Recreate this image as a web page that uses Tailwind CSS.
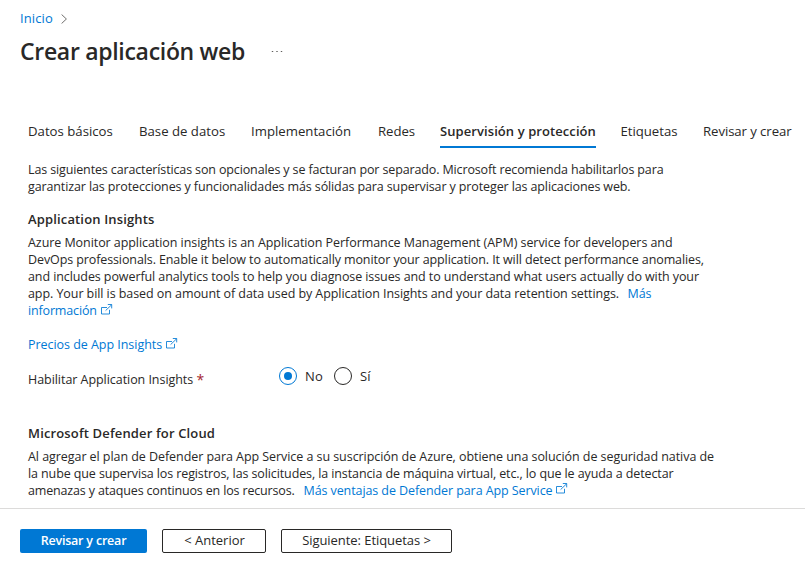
<!DOCTYPE html>
<html lang="es">
<head>
<meta charset="utf-8">
<title>Crear aplicación web</title>
<script src="https://cdn.jsdelivr.net/npm/@tailwindcss/browser@4"></script>
</head>
<body class="flex h-[572px] w-[805px] flex-col overflow-hidden bg-white font-['Open_Sans',sans-serif] text-[12.5px] leading-[17px] whitespace-nowrap text-[#292827]">
<svg class="hidden"><symbol id="ext" viewBox="0 0 12 11"><path d="M6 3.5H.5v6.5h8V5.8M4.6 6.6 10.6.8M6.8.5h3.9v3.9" fill="none" stroke="currentColor" stroke-width="0.85"/></symbol></svg>
<main class="flex h-[509px] shrink-0 flex-col border-b border-[#dcdbda]">
  <nav class="mt-[10px] ml-5 flex items-center gap-2 text-[13px] text-[#0078d4]"><a class="tracking-[0.12px]">Inicio</a>
    <svg class="mt-px h-[10px] w-[7px] text-[#605e5c]" viewBox="0 0 7 10"><path d="M.6.5 5.4 5 .6 9.5" fill="none" stroke="currentColor" stroke-width="0.9"/></svg></nav>
  <header class="mt-2 ml-5 flex h-8 items-center"><h1 class="w-[251px] text-[23px] leading-8 font-semibold tracking-[-0.3px]">Crear aplicación web</h1>
    <svg class="mt-px h-[3px] w-3 text-[#605e5c]" viewBox="0 0 12 3"><path d="M.8 1.5h1.4M5.3 1.5h1.4M9.8 1.5h1.4" stroke="currentColor" stroke-width="1.2"/></svg></header>
  <div class="mt-14 ml-7 flex h-[25px] text-[13.2px]">
    <span class="w-[111px]">Datos básicos</span><span class="w-[112px]">Base de datos</span><span class="w-[127px]">Implementación</span><span class="w-[62px] tracking-[-0.06px]">Redes</span>
    <span class="mr-[24.5px] w-[156px] border-b-2 border-[#0078d4] text-[13px] font-semibold tracking-[0.08px]">Supervisión y protección</span>
    <span class="w-[82.5px] tracking-[-0.03px]">Etiquetas</span><span class="tracking-[-0.08px]">Revisar y crear</span>
  </div>
  <section class="mt-[13px] ml-7 flex flex-col items-start">
    <span class="tracking-[-0.132px]">Las siguientes características son opcionales y se facturan por separado. Microsoft recomienda habilitarlos para</span>
    <span class="tracking-[-0.117px]">garantizar las protecciones y funcionalidades más sólidas para supervisar y proteger las aplicaciones web.</span>
    <h2 class="mt-4 mb-[6px] text-[13px] font-semibold tracking-[0.15px]">Application Insights</h2>
    <span class="tracking-[-0.064px]">Azure Monitor application insights is an Application Performance Management (APM) service for developers and</span>
    <span class="tracking-[-0.104px]">DevOps professionals. Enable it below to automatically monitor your application. It will detect performance anomalies,</span>
    <span class="tracking-[-0.088px]">and includes powerful analytics tools to help you diagnose issues and to understand what users actually do with your</span>
    <div class="flex text-[#0078d4]"><span class="w-[599.5px] tracking-[-0.071px] text-[#292827]">app. Your bill is based on amount of data used by Application Insights and your data retention settings.</span><a class="tracking-[-0.05px]">Más</a></div>
    <div class="flex text-[#0078d4]"><a class="w-[73px] tracking-[-0.16px]">información</a><svg class="mt-[2px] h-[11px] w-3"><use href="#ext"/></svg></div>
    <div class="mt-[17px] flex text-[#0078d4]"><a class="w-[138px] tracking-[-0.04px]">Precios de App Insights</a><svg class="mt-[2px] h-[11px] w-3"><use href="#ext"/></svg></div>
    <div class="mt-[14px] flex h-[27px]"><span class="mt-1 w-[168.5px] tracking-[-0.05px]">Habilitar Application Insights</span><span class="mt-1 w-[82.5px] text-[14px] text-[#a4262c]">*</span>
      <span class="size-[18px] rounded-full border border-[#0078d4] p-1"><span class="block size-2 rounded-full bg-[#0078d4]"></span></span><span class="mt-px ml-2 w-[29px] text-[13px] tracking-[0.1px]">No</span><span class="size-[18px] rounded-full border border-[#292827]"></span><span class="mt-px ml-2 text-[13px]">Sí</span></div>
    <h2 class="mt-[31px] mb-[6px] text-[13px] font-semibold tracking-[0.15px]">Microsoft Defender for Cloud</h2>
    <span class="tracking-[-0.058px]">Al agregar el plan de Defender para App Service a su suscripción de Azure, obtiene una solución de seguridad nativa de</span>
    <span class="tracking-[-0.107px]">la nube que supervisa los registros, las solicitudes, la instancia de máquina virtual, etc., lo que le ayuda a detectar</span>
    <div class="flex text-[#0078d4]"><span class="w-[275.5px] tracking-[-0.16px] text-[#292827]">amenazas y ataques continuos en los recursos.</span><a class="w-[252.5px] tracking-[-0.09px]">Más ventajas de Defender para App Service</a><svg class="mt-px h-[11px] w-3"><use href="#ext"/></svg></div>
  </section>
</main>
<footer class="flex gap-[15px] pt-5 pl-5 text-[13px]">
  <button class="flex h-6 w-[127px] items-center justify-center rounded-[2px] bg-[#0078d4] pb-[2px] text-[12.5px] font-semibold tracking-[-0.2px] text-white">Revisar y crear</button>
  <button class="flex h-6 w-[104px] items-center justify-center rounded-[2px] border border-[#292827] pb-[2px] pl-px">&lt; Anterior</button>
  <button class="flex h-6 w-[171px] items-center justify-center rounded-[2px] border border-[#292827] pb-[2px] tracking-[-0.06px]">Siguiente: Etiquetas &gt;</button>
</footer>
</body></html>
